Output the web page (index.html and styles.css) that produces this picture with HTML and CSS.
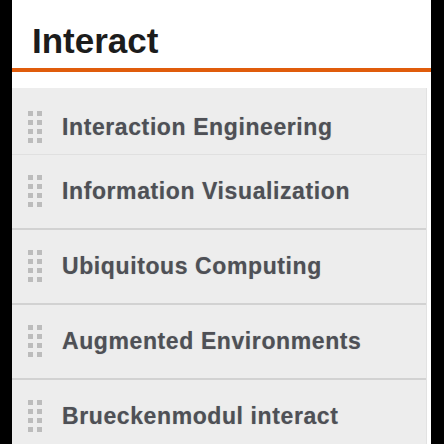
FILE: index.html
```html
<html>
<head>
	<meta http-equiv="Content-Type" content="text/html; charset=utf-8" />
	<title>Interact</title>
	<link rel="stylesheet" href="styles.css">
</head>
<body>
	<div class="panel">
		<div class="title">Interact</div>
		<div class="list">
			<div class="item first">
				<svg class="grip" width="14" height="33" viewBox="0 0 14 33"><g fill="#b4b4b4"><rect x="0" y="0" width="5" height="5"/><rect x="9" y="0" width="5" height="5"/><rect x="0" y="9" width="5" height="5"/><rect x="9" y="9" width="5" height="5"/><rect x="0" y="18" width="5" height="5"/><rect x="9" y="18" width="5" height="5"/><rect x="0" y="27" width="5" height="5"/><rect x="9" y="27" width="5" height="5"/></g></svg>
				<div class="label">Interaction Engineering</div>
			</div>
			<div class="item">
				<svg class="grip" width="14" height="33" viewBox="0 0 14 33"><g fill="#b4b4b4"><rect x="0" y="0" width="5" height="5"/><rect x="9" y="0" width="5" height="5"/><rect x="0" y="9" width="5" height="5"/><rect x="9" y="9" width="5" height="5"/><rect x="0" y="18" width="5" height="5"/><rect x="9" y="18" width="5" height="5"/><rect x="0" y="27" width="5" height="5"/><rect x="9" y="27" width="5" height="5"/></g></svg>
				<div class="label">Information Visualization</div>
			</div>
			<div class="item">
				<svg class="grip" width="14" height="33" viewBox="0 0 14 33"><g fill="#b4b4b4"><rect x="0" y="0" width="5" height="5"/><rect x="9" y="0" width="5" height="5"/><rect x="0" y="9" width="5" height="5"/><rect x="9" y="9" width="5" height="5"/><rect x="0" y="18" width="5" height="5"/><rect x="9" y="18" width="5" height="5"/><rect x="0" y="27" width="5" height="5"/><rect x="9" y="27" width="5" height="5"/></g></svg>
				<div class="label">Ubiquitous Computing</div>
			</div>
			<div class="item">
				<svg class="grip" width="14" height="33" viewBox="0 0 14 33"><g fill="#b4b4b4"><rect x="0" y="0" width="5" height="5"/><rect x="9" y="0" width="5" height="5"/><rect x="0" y="9" width="5" height="5"/><rect x="9" y="9" width="5" height="5"/><rect x="0" y="18" width="5" height="5"/><rect x="9" y="18" width="5" height="5"/><rect x="0" y="27" width="5" height="5"/><rect x="9" y="27" width="5" height="5"/></g></svg>
				<div class="label">Augmented Environments</div>
			</div>
			<div class="item last">
				<svg class="grip" width="14" height="33" viewBox="0 0 14 33"><g fill="#b4b4b4"><rect x="0" y="0" width="5" height="5"/><rect x="9" y="0" width="5" height="5"/><rect x="0" y="9" width="5" height="5"/><rect x="9" y="9" width="5" height="5"/><rect x="0" y="18" width="5" height="5"/><rect x="9" y="18" width="5" height="5"/><rect x="0" y="27" width="5" height="5"/><rect x="9" y="27" width="5" height="5"/></g></svg>
				<div class="label">Brueckenmodul interact</div>
			</div>
		</div>
	</div>
</body>
</html>
```

FILE: styles.css
```css
html, body {
	margin: 0;
	height: 100%;
	background: #000000;
	overflow: hidden;
}
.panel {
	display: flex;
	flex-direction: column;
	margin: 0 13px 0 12px;
	height: 100%;
	background: #ffffff;
	font-family: 'Liberation Sans', Arial, sans-serif;
}
.title {
	flex: none;
	height: 72px;
	box-sizing: border-box;
	padding: 21px 0 0 20px;
	font-size: 35px;
	font-weight: bold;
	line-height: 40px;
	color: #1c1c1c;
	border-bottom: 4px solid #e05c0c;
}
.list {
	flex: 1;
	overflow: hidden;
	margin-top: 16px;
	margin-right: 4px;
	background: #ededed;
	border-right: 1px solid #e2e2e2;
}
.item {
	display: flex;
	align-items: center;
	height: 73px;
	padding-left: 16px;
	border-bottom: 2px solid #d2d2d2;
}
.item.first {
	height: 54px;
	padding-top: 12px;
	border-bottom: 1px solid #e0e0e0;
}
.item.last {
	border-bottom: none;
}
.grip {
	flex: none;
	opacity: 0.85;
	filter: blur(0.5px);
}
.label {
	margin-left: 20px;
	font-size: 23px;
	font-weight: bold;
	letter-spacing: 0.6px;
	color: #4e5056;
	text-shadow: 0 0 1px rgba(60, 60, 60, 0.35);
}
```
